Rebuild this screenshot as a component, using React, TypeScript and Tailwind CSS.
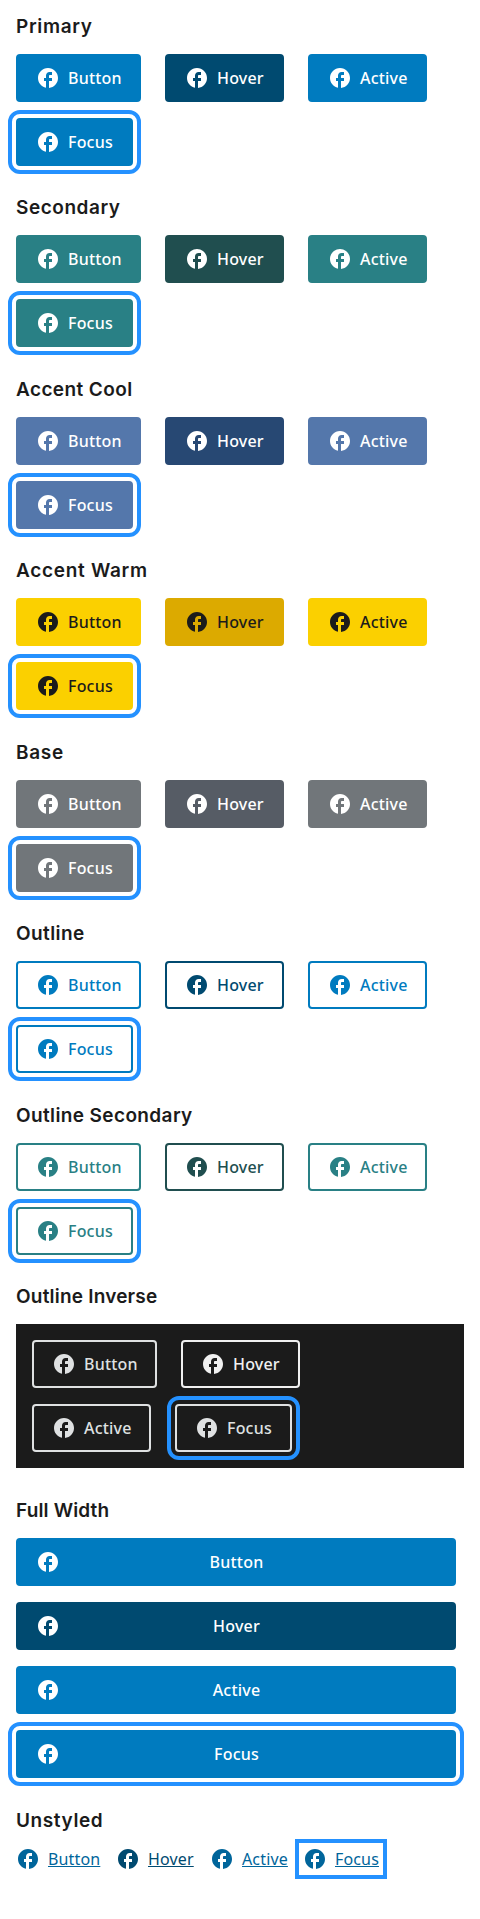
import { MdFacebook } from "react-icons/md";
import { clsx } from "clsx";

type State = "Button" | "Hover" | "Active" | "Focus";

const states: State[] = ["Button", "Hover", "Active", "Focus"];

const widths: Record<State, string> = {
  Button: "w-[125px]",
  Hover: "w-[119px]",
  Active: "w-[119px]",
  Focus: "w-[117px]",
};

const linkWidths: Record<State, string> = {
  Button: "w-[84px]",
  Hover: "w-[78px]",
  Active: "w-[77px]",
  Focus: "w-[76px]",
};

const ring = "outline-4 outline-offset-4 outline-[#2491ff]";

interface Variant {
  title: string;
  tracking: string;
  normal: string;
  hover: string;
}

const variants: Variant[] = [
  {
    title: "Primary",
    tracking: "tracking-[0.65px]",
    normal: "border-[#007bbf] bg-[#007bbf] text-white",
    hover: "border-[#004a70] bg-[#004a70] text-white",
  },
  {
    title: "Secondary",
    tracking: "tracking-[0.55px]",
    normal: "border-[#298085] bg-[#298085] text-white",
    hover: "border-[#204e4f] bg-[#204e4f] text-white",
  },
  {
    title: "Accent Cool",
    tracking: "tracking-[0.4px]",
    normal: "border-[#5477ab] bg-[#5477ab] text-white",
    hover: "border-[#274873] bg-[#274873] text-white",
  },
  {
    title: "Accent Warm",
    tracking: "tracking-[0.7px]",
    normal: "border-[#fbd000] bg-[#fbd000] text-[#1b1b1b]",
    hover: "border-[#dcaa00] bg-[#dcaa00] text-[#1b1b1b]",
  },
  {
    title: "Base",
    tracking: "tracking-[0.7px]",
    normal: "border-[#71767a] bg-[#71767a] text-white",
    hover: "border-[#565c65] bg-[#565c65] text-white",
  },
  {
    title: "Outline",
    tracking: "tracking-[0.4px]",
    normal: "border-[#007bbf] text-[#007bbf]",
    hover: "border-[#004a70] text-[#004a70]",
  },
  {
    title: "Outline Secondary",
    tracking: "tracking-[0.38px]",
    normal: "border-[#298085] text-[#298085]",
    hover: "border-[#204e4f] text-[#204e4f]",
  },
];

function Heading({ title, tracking }: { title: string; tracking: string }) {
  return (
    <h3 className="h-[39px] font-['Inter',sans-serif] text-[19px] leading-6 font-semibold text-[#1b1b1b]">
      <span className={tracking}>{title}</span>
    </h3>
  );
}

function Button({ state, colors }: { state: State; colors: string }) {
  return (
    <button
      className={clsx(
        "flex h-12 items-center gap-2 rounded border-2 pl-[18px] text-base leading-4 font-medium whitespace-nowrap",
        widths[state],
        colors,
        state === "Focus" && ring,
      )}
    >
      <MdFacebook className="size-6 shrink-0" />
      <span className="tracking-[0.2px]">{state}</span>
    </button>
  );
}

function FullButton({ state }: { state: State }) {
  return (
    <button
      className={clsx(
        "grid h-12 w-full grid-cols-[24px_1fr_24px] items-center rounded border-2 px-[18px] text-base leading-4 font-medium text-white",
        state === "Hover" ? "border-[#004a70] bg-[#004a70]" : "border-[#007bbf] bg-[#007bbf]",
        state === "Focus" && ring,
      )}
    >
      <MdFacebook className="size-6" />
      <span className="pl-px text-center tracking-[0.2px]">{state}</span>
    </button>
  );
}

export default function App() {
  return (
    <main className="h-[1919px] bg-white px-4 pt-[15px] font-['Noto_Sans',sans-serif]">
      {variants.map((v) => (
        <section key={v.title} className="h-[181.43px]">
          <Heading title={v.title} tracking={v.tracking} />
          <div className="flex flex-wrap gap-x-6 gap-y-4">
            {states.map((s) => (
              <Button key={s} state={s} colors={s === "Hover" ? v.hover : v.normal} />
            ))}
          </div>
        </section>
      ))}

      <section className="h-[214px]">
        <Heading title="Outline Inverse" tracking="tracking-[0.2px]" />
        <div className="flex flex-col gap-4 bg-[#1b1b1b] p-4">
          <div className="flex gap-6">
            <Button state="Button" colors="border-[#dfe1e2] text-[#dfe1e2]" />
            <Button state="Hover" colors="border-[#f0f0f0] text-[#f0f0f0]" />
          </div>
          <div className="flex gap-6">
            <Button state="Active" colors="border-[#dfe1e2] text-[#dfe1e2]" />
            <Button state="Focus" colors="border-[#dfe1e2] text-[#dfe1e2]" />
          </div>
        </div>
      </section>

      <section className="h-[310px]">
        <Heading title="Full Width" tracking="tracking-[0.15px]" />
        <div className="flex flex-col gap-4 pr-2">
          {states.map((s) => (
            <FullButton key={s} state={s} />
          ))}
        </div>
      </section>

      <section>
        <Heading title="Unstyled" tracking="tracking-[0.6px]" />
        <div className="-mt-px flex gap-4">
          {states.map((s) => (
            <a
              key={s}
              className={clsx(
                "flex h-6 items-center gap-2 text-base whitespace-nowrap",
                linkWidths[s],
                s === "Hover" ? "text-[#004a70]" : "text-[#00659b]",
                s === "Focus" && ring,
              )}
            >
              <MdFacebook className="size-6 shrink-0" />
              <span className="tracking-[0.15px] underline">{s}</span>
            </a>
          ))}
        </div>
      </section>
    </main>
  );
}
